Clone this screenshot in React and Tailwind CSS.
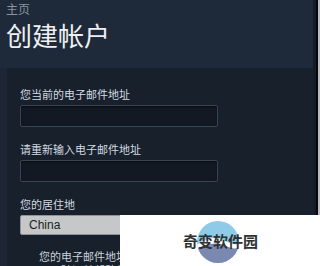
export default function App() {
  const fields = [
    { label: '您当前的电子邮件地址' },
    { label: '请重新输入电子邮件地址' },
  ];

  return (
    <div
      className="relative flex w-[320px] h-[266px] overflow-hidden bg-[#1d2634]"
      style={{ fontFamily: '"Noto Sans CJK SC", "Liberation Sans", sans-serif' }}
    >
      <div className="flex flex-col w-[313px]">
        {/* header */}
        <div className="h-[68px] shrink-0 bg-[#1e2a3a] px-[6px] pt-[1px]">
          <div className="text-[12px] leading-[16px] text-[#8a929b]">主页</div>
          <h1 className="mt-[1px] text-[26px] leading-[34px] text-[#eef0f2] font-normal">创建帐户</h1>
        </div>

        {/* form panel */}
        <div className="flex-1 ml-[7px] bg-[#18202b] pl-[13px] pt-[18px]">
          {fields.map((f) => (
            <div key={f.label} className="mb-[14px]">
              <div className="text-[11px] leading-[16px] text-[#d3dae2]">{f.label}</div>
              <div className="mt-[3px] w-[198px] h-[22px] rounded-[2px] border border-[#3b4452] bg-[#121923] shadow-[inset_0_1px_2px_rgba(0,0,0,0.6)]" />
            </div>
          ))}
          <div>
            <div className="text-[11px] leading-[16px] text-[#d3dae2]">您的居住地</div>
            <div className="mt-[3px] w-[198px] h-[20px] rounded-[2px] border border-[#8f9398] bg-[#c5c7c9] pl-[8px] flex items-center">
              <span className="text-[12px] text-[#1c1f22]" style={{ fontFamily: '"Liberation Sans", Arial, sans-serif' }}>China</span>
            </div>
          </div>
          <div className="mt-[14px] pl-[19px] text-[11px] leading-[14px] text-[#c9d2db]">
            您的电子邮件地址将用于确认购买，
            <br />
            用于验证并帮助您管理帐户
          </div>
        </div>
      </div>

      {/* right edge */}
      <div className="w-[3px] bg-[#151c26]" />
      <div className="w-[2px] bg-[#06080b]" />
      <div className="w-[2px] bg-[#b8bcc0]" />

      {/* watermark overlay */}
      <div className="absolute left-[120px] top-[215px] w-[200px] h-[51px] bg-white">
        <svg className="absolute left-[76px] top-[4px]" width="44" height="47" viewBox="0 0 44 47">
          <defs>
            <clipPath id="c">
              <circle cx="22" cy="23" r="21" />
            </clipPath>
          </defs>
          <g clipPath="url(#c)">
            <rect x="0" y="0" width="44" height="47" fill="#8ecbe9" />
            <path d="M0 26 C10 20 20 16 30 22 C36 26 40 26 44 24 L44 47 L0 47 Z" fill="#ffffff" />
            <path d="M0 30 C10 25 20 22 30 27 C36 30 40 30 44 28 L44 47 L0 47 Z" fill="#7b89b1" />
          </g>
        </svg>
        <div className="absolute left-[63px] top-[17px] text-[15px] leading-[18px] font-bold text-[#2f3133] tracking-[0px]">
          奇变软件园
        </div>
      </div>
    </div>
  );
}
